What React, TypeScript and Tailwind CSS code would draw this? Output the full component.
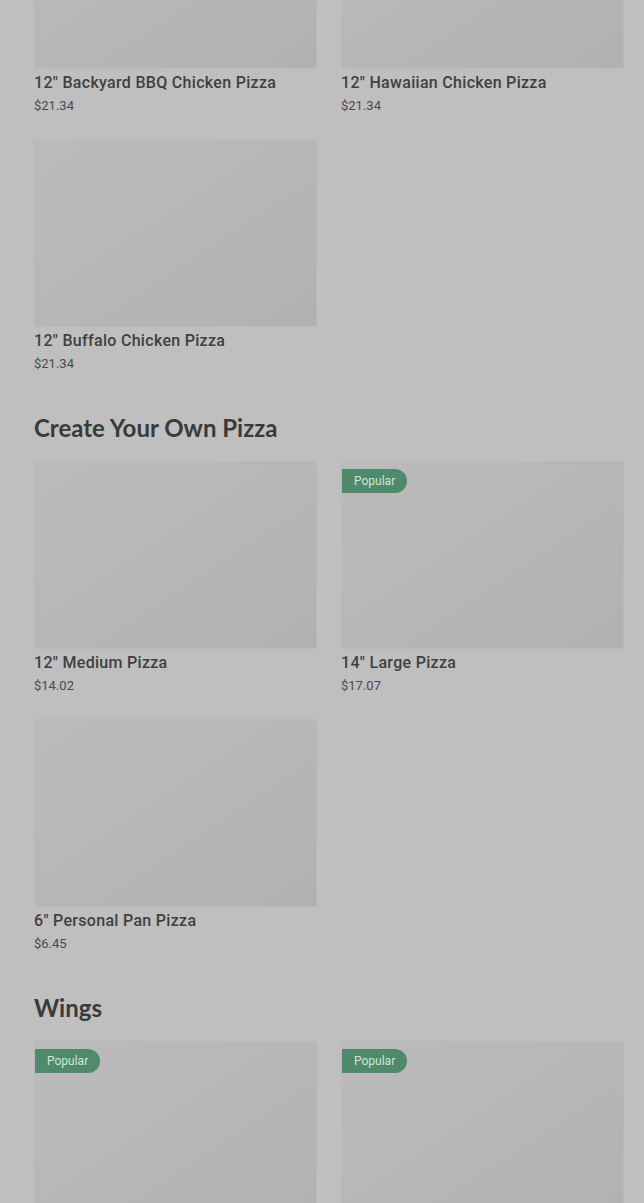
type Item = { name: string; price: string; popular?: boolean };

const sections: { title?: string; items: Item[] }[] = [
  {
    items: [
      { name: '12" Backyard BBQ Chicken Pizza', price: "$21.34" },
      { name: '12" Hawaiian Chicken Pizza', price: "$21.34" },
      { name: '12" Buffalo Chicken Pizza', price: "$21.34" },
    ],
  },
  {
    title: "Create Your Own Pizza",
    items: [
      { name: '12" Medium Pizza', price: "$14.02" },
      { name: '14" Large Pizza', price: "$17.07", popular: true },
      { name: '6" Personal Pan Pizza', price: "$6.45" },
    ],
  },
  {
    title: "Wings",
    items: [
      { name: "Traditional Wings", price: "$12.99", popular: true },
      { name: "Boneless Wings", price: "$11.49", popular: true },
    ],
  },
];

// Menu card with placeholder image
const MenuCard = ({ item }: { item: Item }) => (
  <div className="flex flex-col">
    <div className="relative h-[188px] bg-gradient-to-br from-[#bbbbbb] via-[#b7b7b7] to-[#b1b1b1] border border-[#b9b9b9]">
      {item.popular && (
        <span className="absolute left-0 top-[7px] h-[24px] flex items-center pl-[12px] pr-[12px] rounded-r-full bg-[#4e8a6b] text-[#d6e4dc] text-[12px] font-['Roboto',sans-serif]">
          Popular
        </span>
      )}
    </div>
    <p className="mt-[2px] h-[24px] leading-[24px] text-[16px] font-medium tracking-[0.3px] text-[#3f3f3f] font-['Roboto',sans-serif]">
      {item.name}
    </p>
    <p className="h-[20px] leading-[22px] text-[13px] text-[#4a4a4a] font-['Roboto',sans-serif]">
      {item.price}
    </p>
  </div>
);

export default function App() {
  return (
    <div className="h-[1203px] overflow-hidden bg-[#bfbfbf]">
      <div className="pl-[34px] pr-[20px] -mt-[119px] flex flex-col gap-[39px]">
        {sections.map((section, i) => (
          <section key={i} className="flex flex-col gap-[17px]">
            {section.title && (
              <h2 className="h-[32px] leading-[32px] text-[24px] font-bold tracking-[0px] text-[#3a3a3a] font-['Lato',sans-serif]">
                {section.title}
              </h2>
            )}
            <div className="grid grid-cols-2 gap-x-[24px] gap-y-[24px]">
              {section.items.map((item) => (
                <MenuCard key={item.name} item={item} />
              ))}
            </div>
          </section>
        ))}
      </div>
    </div>
  );
}
